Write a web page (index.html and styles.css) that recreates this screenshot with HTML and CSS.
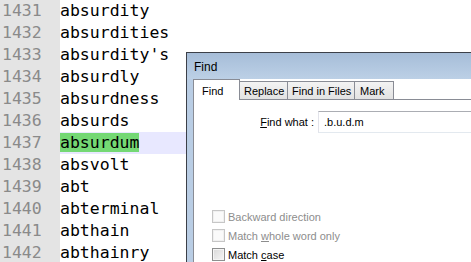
FILE: index.html
```html
<!DOCTYPE html>
<html lang="en">

<head>
    <meta charset="UTF-8" />
    <title>Find</title>
    <link rel="stylesheet" href="styles.css">
</head>

<body>
    <div class="editor">
        <div class="row"><span class="ln">1431</span><span class="code">absurdity</span></div>
        <div class="row"><span class="ln">1432</span><span class="code">absurdities</span></div>
        <div class="row"><span class="ln">1433</span><span class="code">absurdity's</span></div>
        <div class="row"><span class="ln">1434</span><span class="code">absurdly</span></div>
        <div class="row"><span class="ln">1435</span><span class="code">absurdness</span></div>
        <div class="row"><span class="ln">1436</span><span class="code">absurds</span></div>
        <div class="row current"><span class="ln">1437</span><span class="code"><span class="match">absurdum</span></span></div>
        <div class="row"><span class="ln">1438</span><span class="code">absvolt</span></div>
        <div class="row"><span class="ln">1439</span><span class="code">abt</span></div>
        <div class="row"><span class="ln">1440</span><span class="code">abterminal</span></div>
        <div class="row"><span class="ln">1441</span><span class="code">abthain</span></div>
        <div class="row"><span class="ln">1442</span><span class="code">abthainry</span></div>
    </div>

    <div class="dialog">
        <div class="titlebar">Find</div>
        <div class="client">
            <div class="tabs">
                <div class="tab active">Find</div>
                <div class="tab tab-replace">Replace</div>
                <div class="tab tab-files">Find in Files</div>
                <div class="tab tab-mark">Mark</div>
            </div>
            <div class="panel">
                <div class="find-row">
                    <label class="find-label"><u>F</u>ind what :</label>
                    <div class="input">.b.u.d.m</div>
                </div>
                <div class="options">
                    <div class="option disabled"><span class="box"></span><span>Backward direction</span></div>
                    <div class="option disabled"><span class="box"></span><span>Match <u>w</u>hole word only</span></div>
                    <div class="option"><span class="box"></span><span>Match <u>c</u>ase</span></div>
                </div>
            </div>
        </div>
    </div>
</body>

</html>
```

FILE: styles.css
```css
:root {
    --gutter-color: #e4e4e4;
    --line-number-color: #8a8a8a;
    --current-line: #e8e8ff;
    --match-color: #74d874;
    --tab-border: #898c95;
}

* {
    box-sizing: border-box;
    margin: 0;
    padding: 0;
}

body {
    width: 471px;
    height: 262px;
    overflow: hidden;
    position: relative;
    background-color: #ffffff;
}

.editor {
    font-family: 'DejaVu Sans Mono', monospace;
    font-size: 16.5px;
    line-height: 22px;
}

.row {
    display: flex;
    height: 22px;
}

.ln {
    width: 60px;
    padding-left: 2px;
    background-color: var(--gutter-color);
    color: var(--line-number-color);
}

.code {
    flex: 1;
    color: #000000;
    white-space: pre;
}

.current .code {
    background-color: var(--current-line);
}

.match {
    background-color: var(--match-color);
}

/* the dialog window floats over the editor */
.dialog {
    position: absolute;
    left: 186px;
    top: 52px;
    width: 285px;
    height: 210px;
    display: flex;
    flex-direction: column;
    border-top: 1px solid #3c4048;
    border-left: 1px solid #3c4048;
    background-color: #b9cde4;
    font-family: 'Liberation Sans', Arial, sans-serif;
    font-size: 11px;
    color: #000000;
}

.titlebar {
    height: 26px;
    padding: 7px 0 0 7px;
    font-size: 12px;
    background: linear-gradient(#a6bdd8, #bcd0e6);
}

.client {
    flex: 1;
    display: flex;
    flex-direction: column;
    margin-left: 6px;
    background-color: #ffffff;
}

.tabs {
    display: flex;
    align-items: flex-end;
    height: 20px;
    position: relative;
    z-index: 1;
}

.tab {
    height: 18px;
    padding: 3px 0 0 4px;
    border: 1px solid var(--tab-border);
    border-left: none;
    border-bottom: none;
    background: linear-gradient(#f3f3f3, #e2e2e2);
    white-space: nowrap;
}

.tab.active {
    width: 47px;
    height: 21px;
    margin-bottom: -1px;
    padding: 5px 0 0 8px;
    border-left: 1px solid var(--tab-border);
    background: #ffffff;
}

.tab-replace {
    width: 48px;
}

.tab-files {
    width: 67px;
}

.tab-mark {
    width: 39px;
    padding-left: 5px;
}

.panel {
    flex: 1;
    border-top: 1px solid var(--tab-border);
    border-left: 1px solid var(--tab-border);
    padding-top: 11px;
}

.find-row {
    display: flex;
    align-items: center;
    height: 22px;
}

.find-label {
    width: 124px;
    padding-right: 4px;
    text-align: right;
}

.input {
    flex: 1;
    height: 22px;
    padding: 4px 0 0 5px;
    border: 1px solid #abadb3;
    border-left-color: #e2e3ea;
    border-bottom-color: #e3e9ef;
    border-right: none;
}

.options {
    display: flex;
    flex-direction: column;
    gap: 6px;
    margin-top: 77px;
    padding-left: 18px;
}

.option {
    display: flex;
    align-items: center;
    height: 13px;
    gap: 3px;
}

.box {
    width: 13px;
    height: 13px;
    border: 1px solid #8e8f8f;
    background: linear-gradient(135deg, #d9d9d9, #f6f6f6);
    box-shadow: inset 0 0 0 1px #f4f4f4;
}

.option.disabled {
    color: #8d8d8d;
}

.option.disabled .box {
    border-color: #c6c6c6;
    background: #fafafa;
    box-shadow: inset 0 0 0 1px #f0f0f0;
}
```
